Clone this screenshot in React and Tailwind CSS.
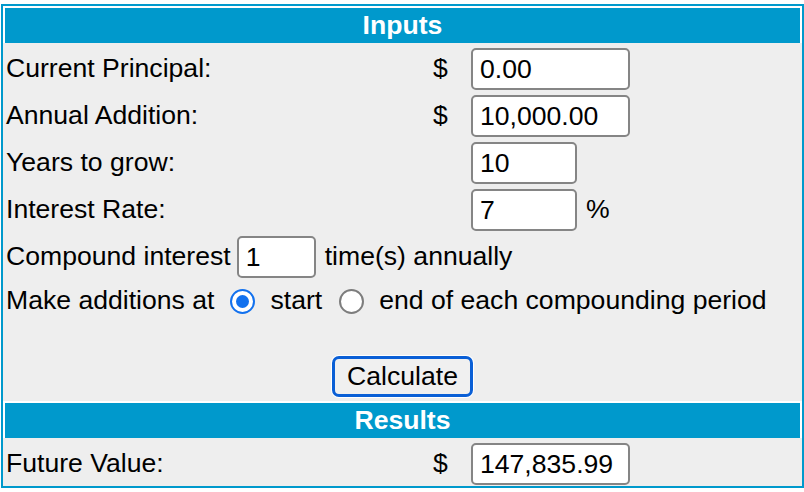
import React from 'react';

const font = "font-['Liberation_Sans',Arial,Helvetica,sans-serif]";

function Box({ value, width }) {
  return (
    <input
      readOnly
      value={value}
      className={`${width} h-[42px] shrink-0 rounded-[5px] border-2 border-[#858585] bg-white pl-[7px] text-[26.6px] leading-none text-black outline-none`}
    />
  );
}

function Header({ children }) {
  return (
    <div className="flex h-[37px] items-center justify-center border-x-2 border-t-2 border-white bg-[#0099cc] text-[26.6px] font-bold text-white">
      {children}
    </div>
  );
}

function Row({ label, dollar, value, width, suffix }) {
  return (
    <div className="flex h-[47px] items-start pt-[5px]">
      <div className="flex h-[42px] w-[430px] shrink-0 items-center pl-[3px]">{label}</div>
      <div className="flex h-[42px] w-[38px] shrink-0 items-center">{dollar ? '$' : ''}</div>
      <Box value={value} width={width} />
      {suffix && <div className="ml-[9px] flex h-[42px] items-center">{suffix}</div>}
    </div>
  );
}

function Radio({ checked }) {
  if (checked) {
    return (
      <div className="flex h-[25px] w-[25px] shrink-0 items-center justify-center rounded-full border-[2.5px] border-[#1271ee] bg-white">
        <div className="h-[13px] w-[13px] rounded-full bg-[#1271ee]" />
      </div>
    );
  }
  return <div className="h-[25px] w-[25px] shrink-0 rounded-full border-2 border-[#7d7d7d] bg-white" />;
}

export default function App() {
  return (
    <div className={`h-[492px] w-[804px] bg-white pt-[4px] text-[26.6px] text-black ${font}`}>
      <div className="ml-[1px] w-[803px] border-2 border-[#0099cc] bg-[#eeeeee]">
        <Header>Inputs</Header>
        <Row label="Current Principal:" dollar value="0.00" width="w-[159px]" />
        <Row label="Annual Addition:" dollar value="10,000.00" width="w-[159px]" />
        <Row label="Years to grow:" value="10" width="w-[106px]" />
        <Row label="Interest Rate:" value="7" width="w-[106px]" suffix="%" />

        <div className="flex h-[47px] items-start pt-[5px]">
          <div className="flex h-[42px] items-center pl-[3px]">Compound interest</div>
          <div className="ml-[6px]">
            <Box value="1" width="w-[79px]" />
          </div>
          <div className="ml-[9px] flex h-[42px] items-center">time(s) annually</div>
        </div>

        <div className="flex h-[46px] items-center pl-[3px]">
          <span>Make additions at</span>
          <div className="ml-[16px]">
            <Radio checked />
          </div>
          <span className="ml-[15px]">start</span>
          <div className="ml-[17px]">
            <Radio />
          </div>
          <span className="ml-[15px]">end of each compounding period</span>
        </div>

        <div className="h-[32px]" />
        <div className="flex justify-center">
          <button className="h-[41px] w-[141px] rounded-[7px] border-[3px] border-[#0a5fd6] bg-[#f0f0f0] text-[26.6px] leading-none text-black ring-1 ring-white">
            Calculate
          </button>
        </div>
        <div className="h-[4px]" />

        <Header>Results</Header>
        <div className="flex h-[48px] items-start pt-[5px]">
          <div className="flex h-[42px] w-[430px] shrink-0 items-center pl-[3px]">Future Value:</div>
          <div className="flex h-[42px] w-[38px] shrink-0 items-center">$</div>
          <Box value="147,835.99" width="w-[159px]" />
        </div>
      </div>
    </div>
  );
}
